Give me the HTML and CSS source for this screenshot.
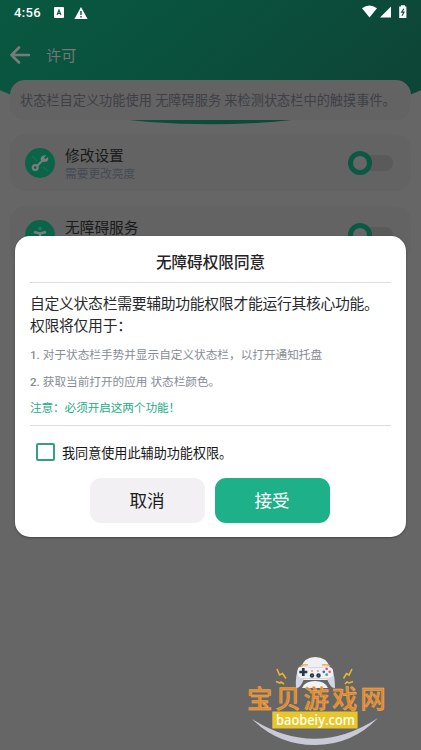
FILE: index.html
```
<!DOCTYPE html>
<html lang="zh-CN">
<head>
<meta charset="utf-8">
<title>许可</title>
<link rel="stylesheet" href="styles.css">
</head>
<body>
<div class="screen">
  <svg class="backdrop" viewBox="0 0 421 130" aria-hidden="true">
    <defs>
      <linearGradient id="green" x1="0" y1="0" x2="1" y2="0.35">
        <stop offset="0" stop-color="#095840"/>
        <stop offset="0.4" stop-color="#09533e"/>
        <stop offset="1" stop-color="#0d4637"/>
      </linearGradient>
    </defs>
    <path fill="url(#green)" d="M0 0H421V90.2A257 80 0 0 1 0 90.2Z"/>
  </svg>
  <header class="status">
    <span class="clock">4:56</span>
    <svg class="status-a" viewBox="0 0 10 11"><rect width="10" height="11" rx="1" fill="#fff"/><path d="M3 8L5 3L7 8M3.6 6.5H6.4" fill="none" stroke="#09543e" stroke-width="1.1"/></svg>
    <svg class="status-warn" viewBox="0 0 14 12"><path d="M7 0L13.6 12H.4Z" fill="#fff"/><path d="M7 4V8M7 9V10.4" stroke="#09543e" stroke-width="1.4"/></svg>
    <svg class="status-right" viewBox="0 0 46 14"><path d="M0 3.2Q7.5-2 15 3.2L7.5 12.5Z M18 12.5L29 1.5V12.5Z M39 1.5V.3H43V1.5H44.4V13H37.2V1.5Z" fill="#fff"/><path d="M41.8 3.8L39.7 7.2H42L40 10.8" fill="none" stroke="#174d3e" stroke-width="1.2"/></svg>
  </header>
  <div class="toolbar">
    <svg class="back" viewBox="0 0 20 18"><path d="M9 1.5L1.5 9L9 16.5M2 9H19" fill="none" stroke="#777b79" stroke-width="2.7" stroke-linecap="round" stroke-linejoin="round"/></svg>
    <span>许可</span>
  </div>
  <div class="hint">状态栏自定义功能使用 无障碍服务 来检测状态栏中的触摸事件。</div>
  <section class="card">
    <svg class="card-icon" viewBox="0 0 30 30"><circle cx="15" cy="15" r="15" fill="#0b6448"/><path d="M7 8L12 13M18 19L23 23" stroke="#1c6e54" stroke-width="1.4"/><path d="M12 18L17.5 12.5" stroke="#777e7b" stroke-width="2.2"/><circle cx="10.2" cy="19.6" r="2.4" fill="none" stroke="#777e7b" stroke-width="2.2"/><path d="M21.3 7.3L19 10L20.3 11.1L23 9Q24.3 13.5 19.7 14Q15.5 14 15.5 10.6Q16.5 6.6 21.3 7.3Z" fill="#777e7b"/></svg>
    <div class="card-text"><div class="card-title">修改设置</div><div class="card-sub">需要更改亮度</div></div>
    <div class="switch"></div>
  </section>
  <section class="card">
    <svg class="card-icon" viewBox="0 0 30 30"><circle cx="15" cy="15" r="15" fill="#0b6448"/><circle cx="15" cy="8.5" r="1.7" fill="#2b7860"/><path d="M9 12L14 13.3H16L21 12M15 13V22" fill="none" stroke="#777e7b" stroke-width="2.5"/></svg>
    <div class="card-text"><div class="card-title">无障碍服务</div><div class="card-sub">&nbsp;</div></div>
    <div class="switch"></div>
  </section>

  <div class="dialog">
    <h1>无障碍权限同意</h1>
    <div class="message">
      <p class="lead">自定义状态栏需要辅助功能权限才能运行其核心功能。<br>权限将仅用于：</p>
      <p class="note"><b>1.</b> 对于状态栏手势并显示自定义状态栏，以打开通知托盘</p>
      <p class="note"><b>2.</b> 获取当前打开的应用 状态栏颜色。</p>
      <p class="note warn">注意：必须开启这两个功能！</p>
    </div>
    <label class="consent"><span class="box"></span>我同意使用此辅助功能权限。</label>
    <div class="actions"><button class="cancel">取消</button><button class="accept">接受</button></div>
  </div>

  <svg class="brand" viewBox="0 0 150 100">
    <path d="M12 69Q75 109 138 68Q112 95 75 95Q38 95 12 69Z" fill="#c9cad8"/>
    <path d="M61 18Q64 7 75 7Q87 7 90 18L92 30H58Z" fill="#f0eff2"/>
    <path d="M59 17Q64 15 69 17H81Q87 15 92 18Q95 26 95 38Q91 39 87 29H64Q60 39 56 38Q55 25 59 17Z" fill="#d4d5e2"/>
    <path d="M58 18Q64 15 70 18H81Q90 15 93 20Q94 27 89 28H61Q56 27 58 18Z" fill="#f1f0f5"/>
    <path d="M61 16Q64 14 68 15M82 15Q87 14 90 16" fill="none" stroke="#e8af50" stroke-width="1.5"/>
    <path d="M63.3 18V26M59.3 22H67.3" stroke="#263849" stroke-width="2.7"/>
    <circle cx="72" cy="25.5" r="2.2" fill="#263849"/><circle cx="78.5" cy="25.5" r="2.2" fill="#263849"/>
    <circle cx="72" cy="25.5" r=".8" fill="#477482"/><circle cx="78.5" cy="25.5" r=".8" fill="#477482"/>
    <circle cx="86.7" cy="18.8" r="1.4" fill="#d95c67"/><circle cx="86.7" cy="24.7" r="1.4" fill="#3daaa6"/><circle cx="83.8" cy="21.8" r="1.4" fill="#536d9b"/><circle cx="89.7" cy="21.8" r="1.4" fill="#ed6679"/>
    <path d="M71 21H73M77 21H79" stroke="#ce6d7a"/>
    <path d="M62 38Q65 31 75 31Q85 31 88 38Z" fill="#f3f2f4"/>
    <path d="M37 19L39.5 25L42.5 23.5L46 28.5M36 31.5L40 33L41 32L44 34M112 19L109 25L106.5 23.5L103.5 28.5M113 31.5L109 33L107 32L105 34" fill="none" stroke="#e9b42f" stroke-width="1.6"/>
    <text x="7" y="57.8" class="brand-name">宝贝游戏网</text>
    <rect x="32.3" y="61.5" width="85.3" height="17" fill="#e8c629"/>
    <text x="36" y="75" class="brand-url" textLength="79" lengthAdjust="spacingAndGlyphs">baobeiy.com</text>
  </svg>
</div>
</body>
</html>
```
FILE: styles.css
```
*, *::before { box-sizing: border-box; }
body { margin: 0; font-family: Roboto, "Noto Sans CJK SC", sans-serif; background: #666; }
.screen { position: relative; height: 750px; overflow: hidden; background: #666; isolation: isolate; }
svg { display: block; flex: none; }
.backdrop { position: absolute; z-index: -1; top: 0; left: 0; width: 421px; height: 130px; }
.status { display: flex; height: 25px; padding: 0 14px; align-items: center; color: #fff; }
.clock { width: 40px; font-size: 13px; font-weight: 500; line-height: 25px; letter-spacing: .35px; }
.status-a { width: 10px; height: 11px; }
.status-warn { width: 14px; height: 12px; margin-left: 10px; }
.status-right { width: 46px; height: 14px; margin-left: auto; margin-right: -1px; margin-top: -2px; }
.toolbar { display: flex; height: 55px; padding: 6px 10px 0; align-items: center; gap: 16px; font-size: 15.2px; line-height: 24px; color: #747876; }
.back { width: 20px; height: 18px; margin-top: -2px; }
.hint { margin: 0 10px; height: 40px; padding-left: 10px; border-radius: 15px; background: #636363; color: #3d4045; font-size: 13.2px; line-height: 42px; white-space: nowrap; }
.card { display: flex; align-items: center; height: 57px; margin: 14px 10px 15px; padding: 0 18px 0 15px; border-radius: 16px; background: #636363; }
.card-icon { width: 30px; height: 30px; }
.card-text { flex: 1; margin-left: 10px; padding-top: 3px; }
.card-title { font-size: 14.7px; line-height: 20px; color: #1a1a1b; }
.card-sub { font-size: 11.7px; line-height: 17px; color: #454a54; }
.switch { position: relative; width: 33px; height: 16px; border-radius: 8px; background: #5a5a5a; }
.switch::before { content: ""; position: absolute; left: -12px; top: -4px; width: 24px; height: 24px; border: 5.5px solid #0b5843; border-radius: 50%; background: #666; }
.dialog { position: absolute; left: 15px; top: 236px; width: 391px; height: 301px; padding: 0 15px; border-radius: 15px; background: #fff; box-shadow: 0 1px 2px #333a; }
h1 { margin: 0; height: 47px; border-bottom: 1px solid #dedede; text-align: center; font-size: 15.6px; font-weight: 500; line-height: 54px; color: #242429; }
.message { height: 143px; padding-top: 10px; border-bottom: 1px solid #dedede; }
p { margin: 0; white-space: nowrap; }
.lead { margin-bottom: 5px; font-size: 14.8px; line-height: 22px; letter-spacing: -.27px; color: #29292c; }
.note { font-size: 11.65px; line-height: 26.6px; color: #878c96; }
.note b { font-weight: 500; }
.note.warn { color: #25ac87; letter-spacing: -.1px; }
.consent { display: flex; align-items: center; height: 52px; padding-left: 6px; gap: 7px; font-size: 13.1px; color: #161617; }
.box { width: 19px; height: 18px; border: 2px solid #389e82; border-radius: 2px; }
.actions { display: flex; justify-content: center; gap: 10px; margin-left: -1px; margin-right: 1px; }
button { width: 115px; height: 45px; padding: 0; border: 0; border-radius: 11px; font: 17.6px/47px Roboto, "Noto Sans CJK SC", sans-serif; }
.cancel { background: #f2f0f2; color: #1b1b1c; }
.accept { background: #1eb089; color: #fff; }
.brand { position: absolute; left: 240px; top: 650px; width: 150px; height: 100px; }
.brand-name { font: 500 25.5px "Noto Sans CJK SC", sans-serif; letter-spacing: 2.8px; fill: #e58a24; stroke: #f1b56a; stroke-width: .4px; }
.brand-url { font: 600 15px "Open Sans", sans-serif; fill: #fffceb; }
```
